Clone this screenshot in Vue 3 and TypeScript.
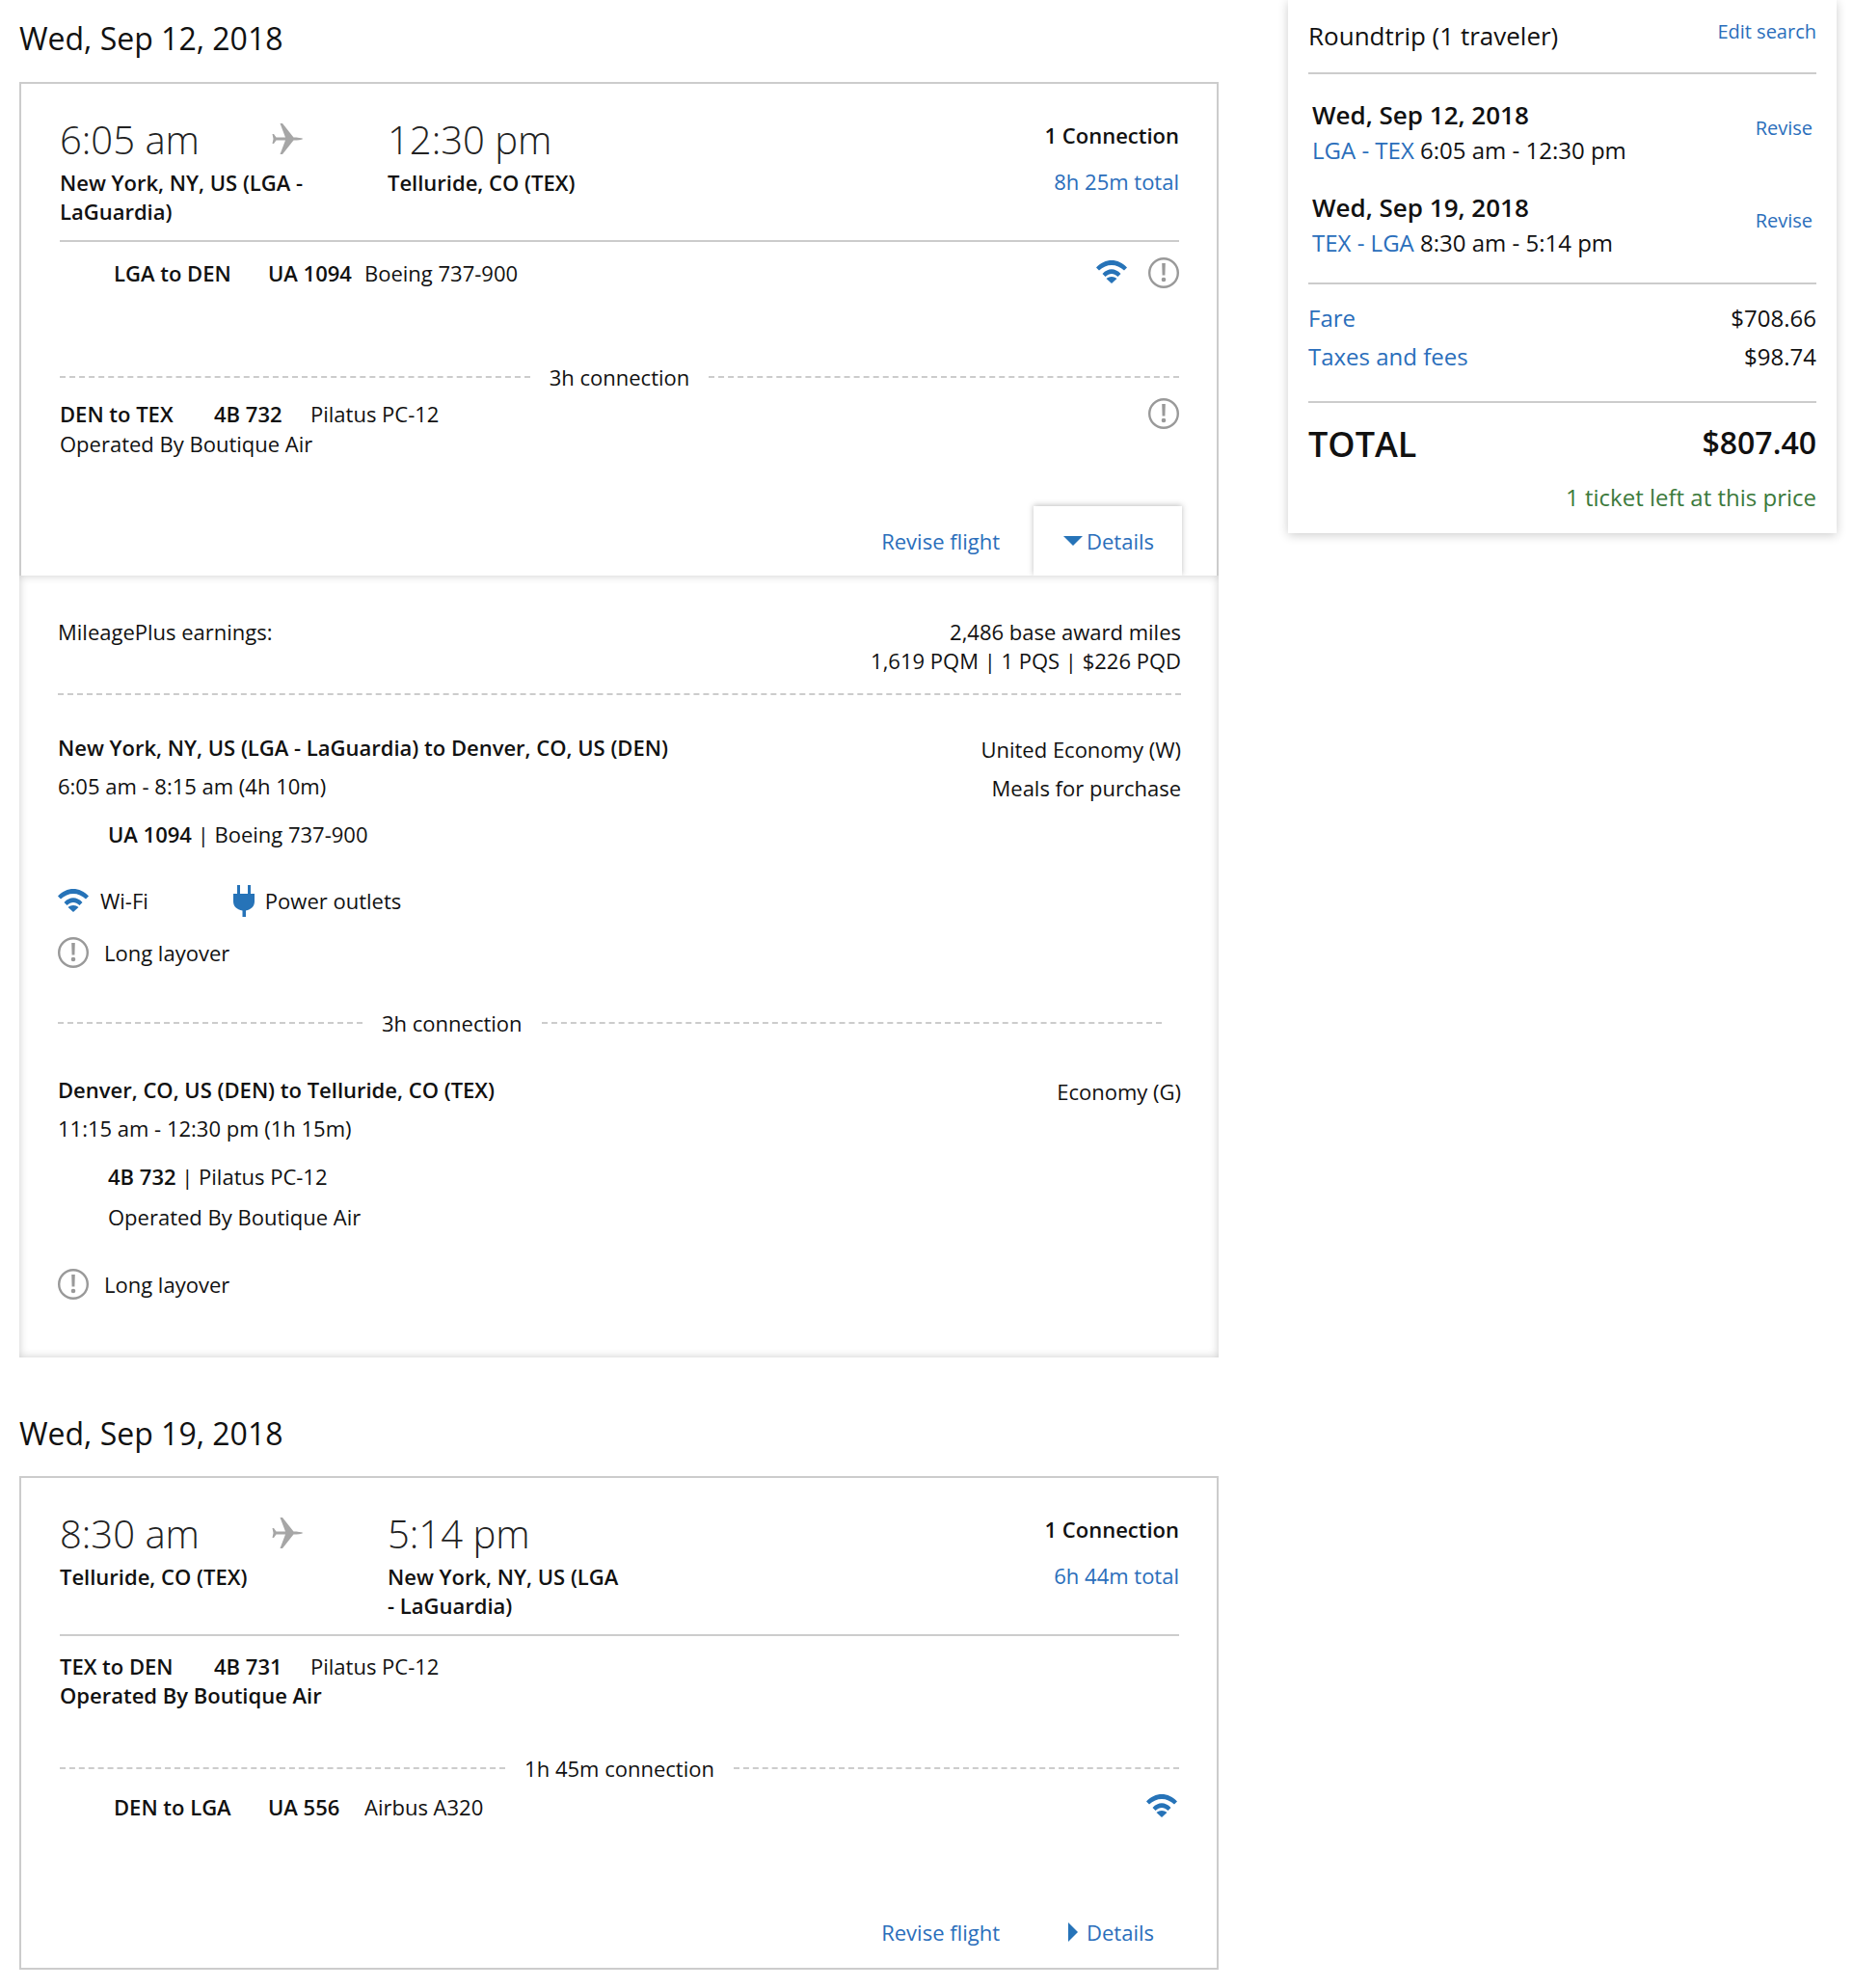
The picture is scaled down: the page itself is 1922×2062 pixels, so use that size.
<script setup lang="ts">
</script>

<template>
  <div class="page">
    <main class="main">
      <h2 class="date first">Wed, Sep 12, 2018</h2>
      <section class="card">
        <div class="top">
          <div class="head">
            <div class="dep">
              <div class="time">6:05 am</div>
              <div class="city">New York, NY, US (LGA - LaGuardia)</div>
            </div>
            <svg class="plane" viewBox="0 0 32 32"><path d="M32 16C30 15 26 14.500 22 14.500L10.500 0H8l5.500 14.500H4L1.500 11H0l1 5-1 5h1.500L4 17.500h9.500L8 32h2.500L22 17.500c4 0 8-.5 10-1.500z"/></svg>
            <div class="arr">
              <div class="time">12:30 pm</div>
              <div class="city">Telluride, CO (TEX)</div>
            </div>
            <div class="sum">
              <div class="conn">1 Connection</div>
              <div class="total">8h 25m total</div>
            </div>
          </div>
          <div class="legs">
            <div class="leg indent">
              <b class="route">LGA to DEN</b><b class="flight">UA 1094</b><span>Boeing 737-900</span>
              <span class="icons">
                <svg class="wifi" viewBox="0 0 32 24"><path d="M0 7.500C9-2.500 23-2.500 32 7.500l-3 3C21.500 3 10.500 3 3 10.500zM6.500 14c6-6.200 13-6.200 19 0l-3 3c-4.500-4-8.500-4-13 0z" fill="#2673b8"/><path d="M16 24l-5.500-5c3-2.700 8-2.700 11 0z" fill="#2673b8"/></svg>
                <svg class="warn" viewBox="0 0 32 32"><circle cx="16" cy="16" r="14.800" fill="none" stroke="#999" stroke-width="2.400"/><path d="M14.200 6h3.600l-.4 12.500h-2.800z" fill="#999"/><circle cx="16" cy="23" r="2.300" fill="#999"/></svg>
              </span>
            </div>
            <div class="sep"><i></i><span>3h connection</span><i></i></div>
            <div class="leg second">
              <b class="route">DEN to TEX</b><b class="flight">4B 732</b><span>Pilatus PC-12</span>
              <span class="icons">
                <svg class="warn" viewBox="0 0 32 32"><circle cx="16" cy="16" r="14.800" fill="none" stroke="#999" stroke-width="2.400"/><path d="M14.200 6h3.600l-.4 12.500h-2.800z" fill="#999"/><circle cx="16" cy="23" r="2.300" fill="#999"/></svg>
              </span>
            </div>
            <div class="op">Operated By Boutique Air</div>
          </div>
          <div class="actions">
            <a class="revise">Revise flight</a>
            <a class="details open"><span class="tri-down"></span>Details</a>
          </div>
        </div>
        <div class="more">
          <div class="miles">
            <div>MileagePlus earnings:</div>
            <div class="right"><div>2,486 base award miles</div><div>1,619 PQM | 1 PQS | $226 PQD</div></div>
          </div>
          <div class="seg one">
            <div class="seg-l">
              <b class="seg-h">New York, NY, US (LGA - LaGuardia) to Denver, CO, US (DEN)</b>
              <div class="seg-t">6:05 am - 8:15 am (4h 10m)</div>
            </div>
            <div class="right cabin"><div>United Economy (W)</div><div class="meal">Meals for purchase</div></div>
          </div>
          <div class="fl"><b>UA 1094</b> | Boeing 737-900</div>
          <div class="amen">
            <svg class="wifi" viewBox="0 0 32 24"><path d="M0 7.500C9-2.500 23-2.500 32 7.500l-3 3C21.500 3 10.500 3 3 10.500zM6.500 14c6-6.200 13-6.200 19 0l-3 3c-4.500-4-8.500-4-13 0z" fill="#2673b8"/><path d="M16 24l-5.500-5c3-2.700 8-2.700 11 0z" fill="#2673b8"/></svg>
            <span class="a-wifi">Wi-Fi</span>
            <svg class="plug" viewBox="0 0 22 33"><path d="M4 0h3v9h8V0h3v9h4v8c0 5-3.500 8.500-9 9.500V33H9.500v-6.500C3.500 25.500 0 22 0 17V9h4z" fill="#2673b8"/></svg>
            <span>Power outlets</span>
          </div>
          <div class="lay">
            <svg class="warn" viewBox="0 0 32 32"><circle cx="16" cy="16" r="14.800" fill="none" stroke="#999" stroke-width="2.400"/><path d="M14.200 6h3.600l-.4 12.500h-2.800z" fill="#999"/><circle cx="16" cy="23" r="2.300" fill="#999"/></svg>
            <span>Long layover</span>
          </div>
          <div class="sep sep2"><i class="short"></i><span>3h connection</span><i></i></div>
          <div class="seg two">
            <div class="seg-l">
              <b class="seg-h">Denver, CO, US (DEN) to Telluride, CO (TEX)</b>
              <div class="seg-t">11:15 am - 12:30 pm (1h 15m)</div>
            </div>
            <div class="right cabin">Economy (G)</div>
          </div>
          <div class="fl fl2"><b>4B 732</b> | Pilatus PC-12</div>
          <div class="fl-op">Operated By Boutique Air</div>
          <div class="lay lay2">
            <svg class="warn" viewBox="0 0 32 32"><circle cx="16" cy="16" r="14.800" fill="none" stroke="#999" stroke-width="2.400"/><path d="M14.200 6h3.600l-.4 12.500h-2.800z" fill="#999"/><circle cx="16" cy="23" r="2.300" fill="#999"/></svg>
            <span>Long layover</span>
          </div>
        </div>
      </section>

      <h2 class="date">Wed, Sep 19, 2018</h2>
      <section class="card">
        <div class="top">
          <div class="head">
            <div class="dep">
              <div class="time">8:30 am</div>
              <div class="city">Telluride, CO (TEX)</div>
            </div>
            <svg class="plane" viewBox="0 0 32 32"><path d="M32 16C30 15 26 14.500 22 14.500L10.500 0H8l5.500 14.500H4L1.500 11H0l1 5-1 5h1.500L4 17.500h9.500L8 32h2.500L22 17.500c4 0 8-.5 10-1.500z"/></svg>
            <div class="arr">
              <div class="time">5:14 pm</div>
              <div class="city">New York, NY, US (LGA - LaGuardia)</div>
            </div>
            <div class="sum">
              <div class="conn">1 Connection</div>
              <div class="total">6h 44m total</div>
            </div>
          </div>
          <div class="legs">
            <div class="leg b1">
              <b class="route">TEX to DEN</b><b class="flight">4B 731</b><span>Pilatus PC-12</span>
            </div>
            <b class="op-b">Operated By Boutique Air</b>
            <div class="sep sep3"><i></i><span>1h 45m connection</span><i></i></div>
            <div class="leg indent b2">
              <b class="route">DEN to LGA</b><b class="flight">UA 556</b><span>Airbus A320</span>
              <span class="icons icons2">
                <svg class="wifi" viewBox="0 0 32 24"><path d="M0 7.500C9-2.500 23-2.500 32 7.500l-3 3C21.500 3 10.500 3 3 10.500zM6.500 14c6-6.200 13-6.200 19 0l-3 3c-4.500-4-8.500-4-13 0z" fill="#2673b8"/><path d="M16 24l-5.500-5c3-2.700 8-2.700 11 0z" fill="#2673b8"/></svg>
              </span>
            </div>
          </div>
          <div class="actions a2">
            <a class="revise">Revise flight</a>
            <a class="details"><span class="tri-right"></span>Details</a>
          </div>
        </div>
      </section>
    </main>

    <aside class="side">
      <div class="s-top">
        <div class="s-title">Roundtrip (1 traveler)</div>
        <a class="s-edit">Edit search</a>
      </div>
      <div class="s-trips">
        <div class="trip">
          <div><b class="t-date">Wed, Sep 12, 2018</b><div><a>LGA - TEX</a> 6:05 am - 12:30 pm</div></div>
          <a class="s-rev">Revise</a>
        </div>
        <div class="trip">
          <div><b class="t-date">Wed, Sep 19, 2018</b><div><a>TEX - LGA</a> 8:30 am - 5:14 pm</div></div>
          <a class="s-rev">Revise</a>
        </div>
      </div>
      <div class="s-fees">
        <div class="fee"><a>Fare</a><span>$708.66</span></div>
        <div class="fee"><a>Taxes and fees</a><span>$98.74</span></div>
      </div>
      <div class="s-total"><b class="t-l">TOTAL</b><b class="t-r">$807.40</b></div>
      <div class="s-left">1 ticket left at this price</div>
    </aside>
  </div>
</template>

<style>
html, body { margin: 0; background: #fff; }
</style>

<style scoped>
.page { width: 1922px; height: 2062px; position: relative; overflow: hidden; display: flex; font-family: "Open Sans", "Noto Sans", sans-serif; font-size: 22px; line-height: 30px; color: #111; }
a { color: #2a6ebb; }
b { font-weight: 600; }
.main { width: 1244px; margin-left: 20px; flex: none; }
.date { margin: 0; font-size: 32px; font-weight: 400; line-height: 40px; height: 40px; margin-top: 59px; margin-bottom: 24px; }
.date.first { margin-top: 20px; margin-bottom: 25px; }
.card { box-sizing: border-box; width: 1244px; background: #fff; }
.top { border: 2px solid #ccc; }
.card .top:not(:last-child) { border-bottom: 0; }
.head { display: flex; padding: 33px 39px 0 40px; height: 164px; box-sizing: border-box; position: relative; }
.head::after { content: ""; position: absolute; left: 40px; right: 39px; bottom: 0; height: 2px; background: #ccc; }
.dep { width: 256px; flex: none; }
.arr { width: 245px; flex: none; margin-left: 87px; }
.plane { width: 33px; height: 32px; fill: #a6a6a6; flex: none; margin: 8px 0 0 -36px; }
.time { font-size: 40px; font-weight: 300; line-height: 50px; color: #222; margin-bottom: 4px; }
.city { font-size: 22px; font-weight: 600; line-height: 30px; }
.sum { margin-left: auto; text-align: right; }
.conn { font-weight: 600; margin-top: 5px; }
.total { color: #2a6ebb; margin-top: 18px; }
.legs { padding: 0 39px 0 40px; }
.leg { display: flex; align-items: center; height: 30px; }
.leg.indent { padding-left: 56px; padding-top: 17px; }
.leg.b2 { padding-top: 10px; }
.route { width: 160px; flex: none; }
.flight { width: 100px; flex: none; }
.icons { margin-left: auto; display: flex; align-items: center; gap: 22px; }
.icons .wifi { position: relative; top: -1px; }
.icons2 { margin-right: 2px; }
.wifi { width: 32px; height: 24px; flex: none; }
.warn { width: 32px; height: 32px; flex: none; }
.sep { display: flex; align-items: center; gap: 20px; height: 30px; margin-top: 78px; }
.sep i { flex: 1; border-top: 2px dashed #ccc; }
.second { margin-top: 8px; }
.op { margin-top: 1px; }
.actions { display: flex; justify-content: flex-end; align-items: center; height: 72px; margin-top: 50px; padding-right: 36px; position: relative; }
.revise { margin-right: 35px; }
.details { width: 154px; height: 72px; display: flex; align-items: center; box-sizing: border-box; padding-left: 36px; gap: 9px; }
.details.open { box-shadow: 0 -1px 6px rgba(0, 0, 0, .25); background: #fff; clip-path: inset(-8px -8px 0 -8px); padding-left: 31px; gap: 4px; }
.tri-down { width: 0; height: 0; border-left: 10px solid transparent; border-right: 10px solid transparent; border-top: 10px solid #2673b8; }
.tri-right { width: 0; height: 0; border-top: 10px solid transparent; border-bottom: 10px solid transparent; border-left: 10px solid #2673b8; }
.more { box-shadow: inset 0 0 10px rgba(0, 0, 0, .2); padding: 43px 39px 0 40px; height: 811px; box-sizing: border-box; position: relative; }
.miles { display: flex; justify-content: space-between; padding-bottom: 19px; border-bottom: 2px dashed #ccc; }
.right { text-align: right; }
.seg { display: flex; justify-content: space-between; }
.seg.one { margin-top: 39px; }
.seg.two { margin-top: 39px; }
.seg-h { display: block; }
.seg-t { margin-top: 10px; }
.cabin { padding-top: 2px; }
.meal { margin-top: 10px; }
.fl { padding-left: 52px; margin-top: 18px; }
.fl2 { margin-top: 20px; }
.fl-op { padding-left: 52px; margin-top: 12px; }
.amen { display: flex; align-items: center; height: 36px; margin-top: 36px; }
.a-wifi { margin: 0 88px 0 12px; }
.plug { width: 22px; height: 33px; margin-right: 11px; flex: none; }
.lay { display: flex; align-items: center; gap: 16px; margin-top: 20px; }
.lay2 { margin-top: 39px; }
.sep2 { margin-top: 42px; margin-right: 20px; }
.sep3 { margin-top: 46px; }
.sep2 .short { flex: 0 0 316px; }
.op-b { display: block; font-weight: 600; }
.a2 { margin-top: 79px; margin-bottom: 1px; }
.b1 { margin-top: 16px; }
.side { position: absolute; left: 1336px; top: 0; width: 569px; height: 553px; box-sizing: border-box; padding: 0 21px; background: #fff; box-shadow: 0 2px 10px rgba(0, 0, 0, .2); }
.s-top { display: flex; justify-content: space-between; height: 75px; border-bottom: 2px solid #ccc; }
.s-title { font-size: 26px; margin-top: 22px; }
.s-edit { font-size: 20px; margin-top: 18px; }
.s-trips { padding: 24px 4px 23px; border-bottom: 2px solid #ccc; font-size: 24px; line-height: 36px; }
.t-date { font-size: 26px; }
.trip { display: flex; justify-content: space-between; align-items: center; }
.trip + .trip { margin-top: 23px; }
.s-rev { font-size: 20px; margin-bottom: 10px; }
.s-fees { padding: 15px 0 26px; border-bottom: 2px solid #ccc; font-size: 24px; line-height: 40px; }
.fee { display: flex; justify-content: space-between; }
.s-total { display: flex; justify-content: space-between; align-items: center; height: 83px; }
.t-l { font-size: 36px; margin-top: 3px; }
.t-r { font-size: 32px; margin-top: -1px; }
.s-left { text-align: right; color: #3c7a3c; font-size: 24px; }
</style>
